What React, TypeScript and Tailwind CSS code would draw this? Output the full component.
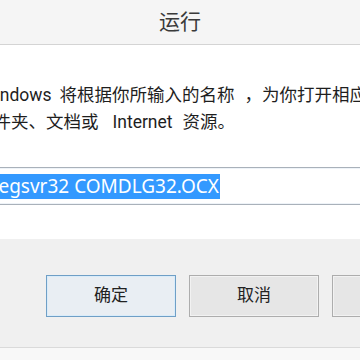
import React from "react";

export default function App() {
  return (
    <div
      className="w-[360px] h-[360px] overflow-hidden bg-white flex flex-col"
      style={{ fontFamily: 'Roboto, "Noto Sans CJK SC", sans-serif' }}
    >
      <div className="h-[45px] shrink-0 bg-[#f5f5f5] border-b border-[#d4d4d4] flex items-center justify-center">
        <span className="text-[21px] text-[#3a3a3a] leading-none pt-[1px]">运行</span>
      </div>
      <div className="h-[194px] shrink-0 bg-white flex flex-col">
        <div className="mt-[37px] text-[17.5px] leading-[27px] text-[#1e1e1e] whitespace-nowrap">
          <div className="ml-[-20px] flex">
            <span>Windows</span>
            <span className="w-[8px] shrink-0" />
            <span>将根据你所输入的名称</span>
            <span className="w-[10px] shrink-0" />
            <span>，为你打开相应的程序、</span>
          </div>
          <div className="ml-[-24px] flex">
            <span>文件夹、文档或</span>
            <span className="w-[14px] shrink-0" />
            <span>Internet</span>
            <span className="w-[10px] shrink-0" />
            <span>资源。</span>
          </div>
        </div>
        <div className="mt-[31px] mx-[-10px] h-[38px] border border-[#a9b1ba] shadow-[inset_0_0_0_1px_#eef3f8] flex items-center">
          <span
            className="bg-[#3399ff] text-white text-[19px] leading-[25px] whitespace-nowrap pr-[1px]"
            style={{ fontFamily: '"Noto Sans", sans-serif' }}
          >
            regsvr32 COMDLG32.OCX
          </span>
        </div>
      </div>
      <div className="h-[108px] shrink-0 bg-[#f0f0f0] flex items-start pt-[36px] pl-[46px] gap-[13px]">
        <button className="w-[130px] h-[42px] shrink-0 border border-[#6f9fc6] bg-[#e9eef3] shadow-[inset_0_0_0_1px_#d9ecfa] text-[17px] text-[#222] flex items-center justify-center">
          确定
        </button>
        <button className="w-[130px] h-[42px] shrink-0 border border-[#adadad] bg-[#e6e6e6] shadow-[inset_0_0_0_1px_#f2f2f2] text-[17px] text-[#222] flex items-center justify-center">
          取消
        </button>
        <button className="w-[130px] h-[42px] shrink-0 border border-[#adadad] bg-[#e6e6e6] shadow-[inset_0_0_0_1px_#f2f2f2] text-[17px] text-[#222]">
          浏览
        </button>
      </div>
      <div className="flex-1 bg-[#f8f8f8] border-t border-[#dadada]" />
    </div>
  );
}
